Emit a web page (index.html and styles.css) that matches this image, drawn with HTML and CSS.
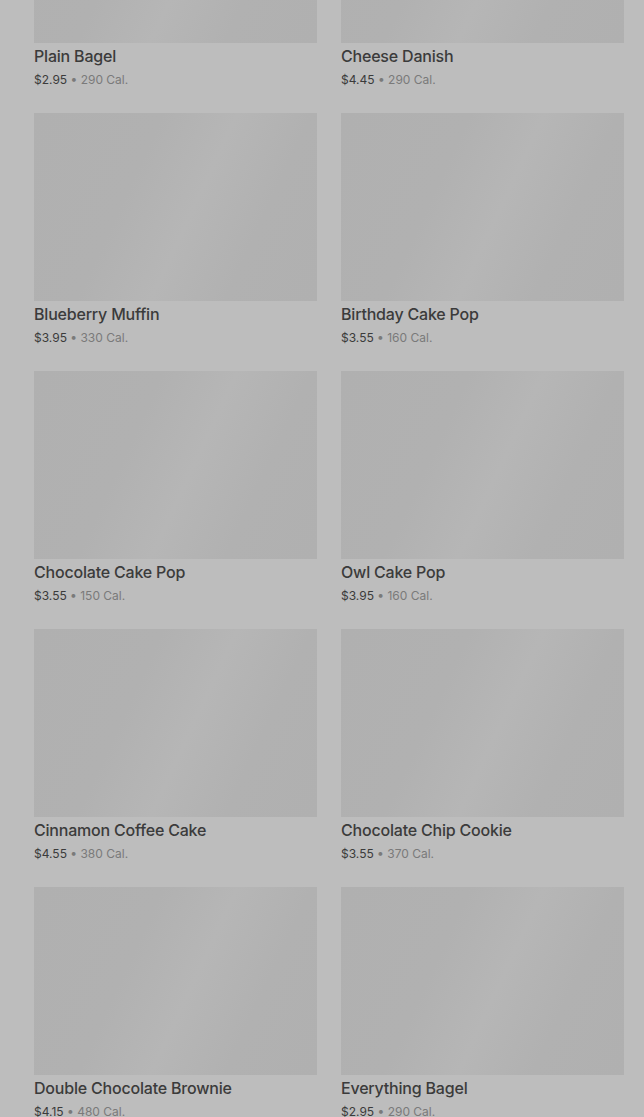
FILE: index.html
```html
<!DOCTYPE html>
<html lang="en">
<head>
    <meta charset="UTF-8">
    <meta name="viewport" content="width=device-width, initial-scale=1.0">
    <title>Bakery</title>
    <link rel="stylesheet" href="styles.css">
</head>
<body>
    <div class="menu-grid">
        <div class="item">
            <div class="item-img"></div>
            <p class="item-name">Plain Bagel</p>
            <p class="item-info"><span class="price">$2.95</span> • 290 Cal.</p>
        </div>
        <div class="item">
            <div class="item-img"></div>
            <p class="item-name">Cheese Danish</p>
            <p class="item-info"><span class="price">$4.45</span> • 290 Cal.</p>
        </div>
        <div class="item">
            <div class="item-img"></div>
            <p class="item-name">Blueberry Muffin</p>
            <p class="item-info"><span class="price">$3.95</span> • 330 Cal.</p>
        </div>
        <div class="item">
            <div class="item-img"></div>
            <p class="item-name">Birthday Cake Pop</p>
            <p class="item-info"><span class="price">$3.55</span> • 160 Cal.</p>
        </div>
        <div class="item">
            <div class="item-img"></div>
            <p class="item-name">Chocolate Cake Pop</p>
            <p class="item-info"><span class="price">$3.55</span> • 150 Cal.</p>
        </div>
        <div class="item">
            <div class="item-img"></div>
            <p class="item-name">Owl Cake Pop</p>
            <p class="item-info"><span class="price">$3.95</span> • 160 Cal.</p>
        </div>
        <div class="item">
            <div class="item-img"></div>
            <p class="item-name">Cinnamon Coffee Cake</p>
            <p class="item-info"><span class="price">$4.55</span> • 380 Cal.</p>
        </div>
        <div class="item">
            <div class="item-img"></div>
            <p class="item-name">Chocolate Chip Cookie</p>
            <p class="item-info"><span class="price">$3.55</span> • 370 Cal.</p>
        </div>
        <div class="item">
            <div class="item-img"></div>
            <p class="item-name">Double Chocolate Brownie</p>
            <p class="item-info"><span class="price">$4.15</span> • 480 Cal.</p>
        </div>
        <div class="item">
            <div class="item-img"></div>
            <p class="item-name">Everything Bagel</p>
            <p class="item-info"><span class="price">$2.95</span> • 290 Cal.</p>
        </div>
    </div>
</body>
</html>
```

FILE: styles.css
```css
body {
    margin: 0;
    padding: 0;
    background-color: #bdbdbd;
    font-family: 'Inter', 'Noto Sans', sans-serif;
    overflow: hidden;
}

.menu-grid {
    display: grid;
    grid-template-columns: 283px 283px;
    column-gap: 24px;
    row-gap: 24px;
    padding: 0 20px 0 34px;
    margin-top: -145px;
}

.item-img {
    height: 188px;
    background: linear-gradient(115deg, #b0b0b0 0%, #b1b1b1 35%, #b6b6b6 55%, #b1b1b1 75%, #b0b0b0 100%);
}

.item-name {
    margin: 3px 0 0;
    font-size: 16px;
    line-height: 20px;
    font-weight: 500;
    letter-spacing: -0.2px;
    color: #3b3b3b;
}

.item-info {
    margin: 5px 0 0;
    font-size: 12px;
    line-height: 18px;
    color: #7a7a7a; /* calories */
}

.item-info .price {
    color: #3b3b3b;
}
```
